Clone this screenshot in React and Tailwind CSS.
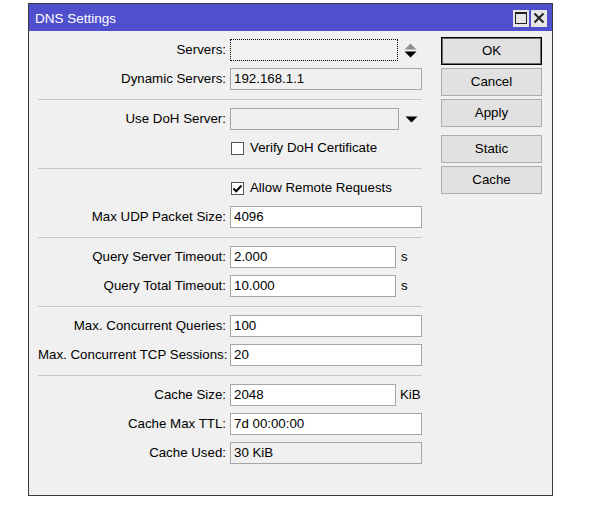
import React from "react";

const font = { fontFamily: '"Liberation Sans", Arial, sans-serif' };

function Row({ label, children }) {
  return (
    <div className="flex items-center h-[22px]">
      <div className="w-[188px] text-right whitespace-nowrap">{label}</div>
      <div className="ml-[4px] flex items-center">{children}</div>
    </div>
  );
}

function Field({ value, w = "w-[192px]", ro = false }) {
  return (
    <div
      className={`${w} h-[22px] border border-[#a6a6a6] ${ro ? "bg-[#f0f0f0]" : "bg-white"} flex items-center pl-[3px] whitespace-nowrap`}
    >
      {value}
    </div>
  );
}

function Sep() {
  return <div className="h-px bg-[#c6c6c6] mt-[2px] mb-[1px] w-[384px]" />;
}

function Check({ checked, label }) {
  return (
    <div className="flex items-center h-[22px]">
      <div className="w-[188px]" />
      <div className="ml-[5px] flex items-center">
        <div className="w-[13px] h-[13px] border border-[#555] bg-white flex items-center justify-center">
          {checked && (
            <svg width="11" height="11" viewBox="0 0 11 11">
              <path d="M1.5 5.5 L4.2 8.2 L9.5 2.5" fill="none" stroke="#000" strokeWidth="2" />
            </svg>
          )}
        </div>
        <span className="ml-[6px]">{label}</span>
      </div>
    </div>
  );
}

function Btn({ children, def = false }) {
  return (
    <div
      className={`w-[101px] h-[28px] flex items-center justify-center bg-[#e1e1e1] ${def ? "border border-black shadow-[inset_0_0_0_1px_#6a6a6a]" : "border border-[#adadad]"}`}
    >
      {children}
    </div>
  );
}

export default function App() {
  return (
    <div className="w-[593px] h-[516px] bg-white pt-[3px] pl-[28px]" style={font}>
      <div className="w-[525px] h-[493px] border border-[#3a3a3a] bg-[#f0f0f0] flex flex-col text-[13.3px] text-black">
        <div className="h-[27px] bg-[#5050cf] flex items-center pl-[6px] pr-[5px]">
          <span className="text-white text-[13.5px] flex-1 mt-[3px]">DNS Settings</span>
          <div className="flex gap-[2px] mt-[1px]">
            <div className="w-[16px] h-[17px] bg-[#e6e6e6] flex items-center justify-center">
              <div className="w-[12px] h-[12px] border border-[#222] border-t-2" />
            </div>
            <div className="w-[16px] h-[17px] bg-[#e6e6e6] flex items-center justify-center">
              <svg width="12" height="12" viewBox="0 0 12 12">
                <path d="M1.5 1.5 L10.5 10.5 M10.5 1.5 L1.5 10.5" stroke="#222" strokeWidth="2" />
              </svg>
            </div>
          </div>
        </div>
        <div className="flex flex-1">
          <div className="pl-[9px] pt-[8px] w-[393px] flex flex-col gap-[7px]">
            <Row label="Servers:">
              <div className="w-[168px] h-[22px] border border-dotted border-black bg-[#f2f2f2]" />
              <svg className="ml-[6px]" width="13" height="15" viewBox="0 0 13 15">
                <path d="M6.5 0.5 L12.5 6.5 L0.5 6.5 Z" fill="#8f8f8f" />
                <path d="M0.5 8.5 L12.5 8.5 L6.5 14.5 Z" fill="#000" />
              </svg>
            </Row>
            <Row label="Dynamic Servers:">
              <Field value="192.168.1.1" ro />
            </Row>
            <Sep />
            <Row label="Use DoH Server:">
              <Field value="" w="w-[169px]" ro />
              <svg className="ml-[6px]" width="13" height="7" viewBox="0 0 13 7">
                <path d="M0.5 0.5 L12.5 0.5 L6.5 6.5 Z" fill="#000" />
              </svg>
            </Row>
            <Check label="Verify DoH Certificate" />
            <Sep />
            <Check checked label="Allow Remote Requests" />
            <Row label="Max UDP Packet Size:">
              <Field value="4096" />
            </Row>
            <Sep />
            <Row label="Query Server Timeout:">
              <Field value="2.000" w="w-[166px]" />
              <span className="ml-[5px]">s</span>
            </Row>
            <Row label="Query Total Timeout:">
              <Field value="10.000" w="w-[166px]" />
              <span className="ml-[5px]">s</span>
            </Row>
            <Sep />
            <Row label="Max. Concurrent Queries:">
              <Field value="100" />
            </Row>
            <Row label="Max. Concurrent TCP Sessions:">
              <Field value="20" />
            </Row>
            <Sep />
            <Row label="Cache Size:">
              <Field value="2048" w="w-[166px]" />
              <span className="ml-[4px]">KiB</span>
            </Row>
            <Row label="Cache Max TTL:">
              <Field value="7d 00:00:00" />
            </Row>
            <Row label="Cache Used:">
              <Field value="30 KiB" ro />
            </Row>
          </div>
          <div className="pl-[19px] pt-[6px] flex flex-col">
            <Btn def>OK</Btn>
            <div className="mt-[3px]"><Btn>Cancel</Btn></div>
            <div className="mt-[3px]"><Btn>Apply</Btn></div>
            <div className="mt-[8px]"><Btn>Static</Btn></div>
            <div className="mt-[3px]"><Btn>Cache</Btn></div>
          </div>
        </div>
      </div>
    </div>
  );
}
